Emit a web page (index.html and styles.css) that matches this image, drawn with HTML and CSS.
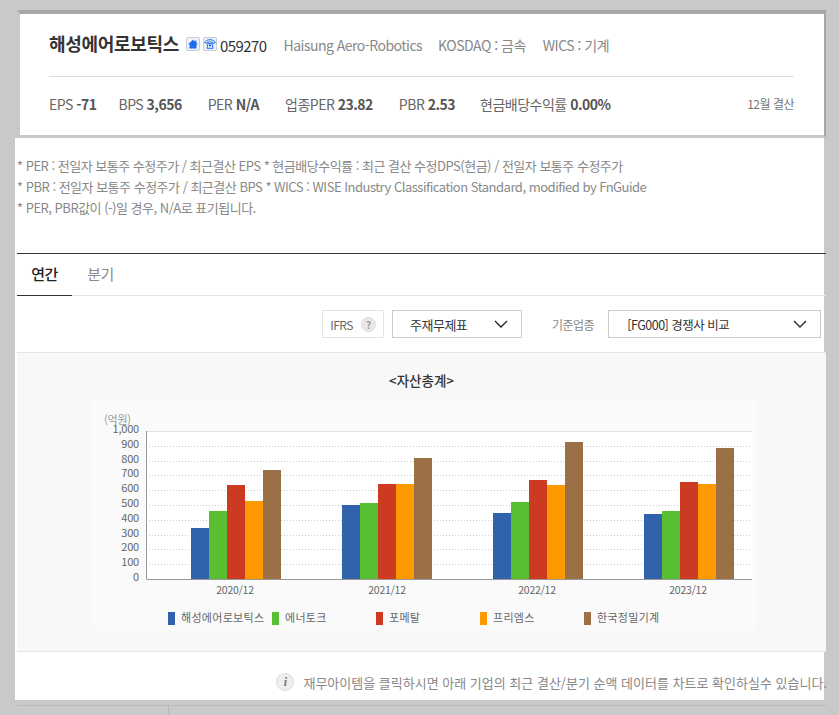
FILE: index.html
```html
<!DOCTYPE html>
<html lang="ko">
<head>
    <meta charset="UTF-8">
    <title>해성에어로보틱스</title>
    <link rel="stylesheet" href="styles.css">
</head>
<body>
    <div class="page">
        <div class="corp">
            <div class="corp-top">
                <h1>해성에어로보틱스</h1>
                <span class="ico-box">
                    <svg width="10" height="10" viewBox="0 0 10 10"><path d="M5 .8 0 5.2h1.5V9.4h7V5.2H10L8.4 3.8V1.4H7.2v1.3z" fill="#1a6ff0"/></svg>
                </span>
                <span class="ico-box">
                    <svg width="12" height="10" viewBox="0 0 12 10"><path d="M.7 3.6C1.4 1.6 3.6.7 6 .7s4.6.9 5.3 2.9L8.9 4.4 8.4 3H3.6l-.5 1.4zM3 9.3l.9-4.6h4.2L9 9.3z" fill="none" stroke="#1a6ff0" stroke-width="1"/><circle cx="6" cy="6.6" r="1.1" fill="#1a6ff0"/></svg>
                </span>
                <span class="code">059270</span>
                <span class="eng">Haisung Aero-Robotics</span>
                <span class="market">KOSDAQ : 금속</span>
                <span class="wics">WICS : 기계</span>
            </div>
            <div class="corp-stats">
                <span class="stat stat-eps">EPS <b>-71</b></span>
                <span class="stat stat-bps">BPS <b>3,656</b></span>
                <span class="stat stat-per">PER <b>N/A</b></span>
                <span class="stat stat-iper">업종PER <b>23.82</b></span>
                <span class="stat stat-pbr">PBR <b>2.53</b></span>
                <span class="stat">현금배당수익률 <b>0.00%</b></span>
                <span class="settle">12월 결산</span>
            </div>
        </div>

        <div class="sheet">
            <div class="notes">
                <p>* PER : 전일자 보통주 수정주가 / 최근결산 EPS * 현금배당수익률 : 최근 결산 수정DPS(현금) / 전일자 보통주 수정주가</p>
                <p>* PBR : 전일자 보통주 수정주가 / 최근결산 BPS * WICS : WISE Industry Classification Standard, modified by FnGuide</p>
                <p>* PER, PBR값이 (-)일 경우, N/A로 표기됩니다.</p>
            </div>

            <div class="tabs">
                <span class="tab active">연간</span>
                <span class="tab">분기</span>
            </div>

            <div class="controls">
                <div class="ifrs">IFRS <span class="help">?</span></div>
                <div class="select select-fin">주재무제표
                    <svg class="arrow" width="14" height="8" viewBox="0 0 14 8"><path d="M1 1l6 6 6-6" fill="none" stroke="#222" stroke-width="1.3"/></svg>
                </div>
                <span class="ctl-label">기준업종</span>
                <div class="select select-peer">[FG000] 경쟁사 비교
                    <svg class="arrow" width="14" height="8" viewBox="0 0 14 8"><path d="M1 1l6 6 6-6" fill="none" stroke="#222" stroke-width="1.3"/></svg>
                </div>
            </div>

            <div class="chart-panel">
                <div class="chart-title">&lt;자산총계&gt;</div>
                <svg class="chart" width="664" height="230" viewBox="92 400 664 230">
                    <rect class="plot" x="146" y="431" width="606" height="148"/>
                    <g class="grid">
                        <path d="M146 446.5H752M146 461.5H752M146 475.5H752M146 490.5H752M146 505.5H752M146 520.5H752M146 535.5H752M146 549.5H752M146 564.5H752"/>
                    </g>
                    <path class="top-line" d="M146 431.5H752"/>

                    <g class="c1">
                        <rect x="191" y="528" width="18" height="51"/>
                        <rect x="342" y="505" width="18" height="74"/>
                        <rect x="493" y="513" width="18" height="66"/>
                        <rect x="644" y="514" width="18" height="65"/>
                    </g>
                    <g class="c2">
                        <rect x="209" y="511" width="18" height="68"/>
                        <rect x="360" y="503" width="18" height="76"/>
                        <rect x="511" y="502" width="18" height="77"/>
                        <rect x="662" y="511" width="18" height="68"/>
                    </g>
                    <g class="c3">
                        <rect x="227" y="485" width="18" height="94"/>
                        <rect x="378" y="484" width="18" height="95"/>
                        <rect x="529" y="480" width="18" height="99"/>
                        <rect x="680" y="482" width="18" height="97"/>
                    </g>
                    <g class="c4">
                        <rect x="245" y="501" width="18" height="78"/>
                        <rect x="396" y="484" width="18" height="95"/>
                        <rect x="547" y="485" width="18" height="94"/>
                        <rect x="698" y="484" width="18" height="95"/>
                    </g>
                    <g class="c5">
                        <rect x="263" y="470" width="18" height="109"/>
                        <rect x="414" y="458" width="18" height="121"/>
                        <rect x="565" y="442" width="18" height="137"/>
                        <rect x="716" y="448" width="18" height="131"/>
                    </g>
                    <path class="axis" d="M146.5 431V579.5H752"/>

                    <text class="unit" x="104" y="424">(억원)</text>
                    <g class="y-labels">
                        <text x="139" y="433">1,000</text>
                        <text x="139" y="448">900</text>
                        <text x="139" y="463">800</text>
                        <text x="139" y="477">700</text>
                        <text x="139" y="492">600</text>
                        <text x="139" y="507">500</text>
                        <text x="139" y="522">400</text>
                        <text x="139" y="537">300</text>
                        <text x="139" y="551">200</text>
                        <text x="139" y="566">100</text>
                        <text x="139" y="581">0</text>
                    </g>
                    <g class="x-labels">
                        <text x="235" y="594">2020/12</text>
                        <text x="387" y="594">2021/12</text>
                        <text x="537" y="594">2022/12</text>
                        <text x="688" y="594">2023/12</text>
                    </g>

                    <g class="legend">
                        <rect class="c1" x="168" y="612" width="7" height="13"/>
                        <text x="181" y="622">해성에어로보틱스</text>
                        <rect class="c2" x="272" y="612" width="7" height="13"/>
                        <text x="285" y="622">에너토크</text>
                        <rect class="c3" x="376" y="612" width="7" height="13"/>
                        <text x="389" y="622">포메탈</text>
                        <rect class="c4" x="480" y="612" width="7" height="13"/>
                        <text x="493" y="622">프리엠스</text>
                        <rect class="c5" x="584" y="612" width="7" height="13"/>
                        <text x="597" y="622">한국정밀기계</text>
                    </g>
                </svg>
            </div>

            <div class="info">
                <span class="info-ico">i</span>
                <span>재무아이템을 클릭하시면 아래 기업의 최근 결산/분기 순액 데이터를 차트로 확인하실수 있습니다.</span>
            </div>
        </div>

        <div class="next-row"><span class="next-cell"></span></div>
    </div>
</body>
</html>
```

FILE: styles.css
```css
html, body {
    height: 715px;
    overflow: hidden;
}
body {
    margin: 0;
    background-color: #c9c9c9;
    font-family: "Noto Sans CJK KR", "Noto Sans", sans-serif;
    color: #888;
    letter-spacing: -0.5px;
}
.page {
    padding: 10px 0 0 15px;
}
/* header box */
.corp {
    box-sizing: border-box;
    width: 809px;
    height: 128px;
    margin-left: 2px;
    padding: 0 30px 0 29px;
    background: white;
    border: 3px solid #c9c9c9;
    border-top: 4px solid #a6a6a6;
    border-right: 2px solid #a6a6a6;
}
.corp-top {
    display: flex;
    align-items: center;
    height: 62px;
    border-bottom: 1px solid #ddd;
}
.corp-top h1 {
    margin: 0 7px 4px 0;
    font-size: 18px;
    font-weight: 700;
    color: #333;
    letter-spacing: -0.3px;
}
.ico-box {
    display: flex;
    align-items: center;
    justify-content: center;
    box-sizing: border-box;
    width: 14px;
    height: 14px;
    margin: 0 3px 3px 0;
    background: #eef1f6;
    border: 1px solid #c3ccd9;
    border-radius: 2px;
}
.code {
    margin-right: 17px;
    font-size: 15px;
    color: #333;
    letter-spacing: -0.6px;
}
.eng, .market, .wics {
    font-size: 14px;
}
.eng { margin-right: 16px; }
.market { margin-right: 17px; }
.corp-stats {
    display: flex;
    align-items: center;
    height: 53px;
    font-size: 14px;
    color: #666;
}
.stat b {
    font-weight: 700;
    color: #555;
}
.stat-eps { margin-right: 22px; }
.stat-bps { margin-right: 26px; }
.stat-per { margin-right: 26px; }
.stat-iper { margin-right: 26px; }
.stat-pbr { margin-right: 25px; }
.settle {
    margin-left: auto;
    font-size: 12px;
    color: #777;
}
/* white sheet */
.sheet {
    width: 809px;
    height: 562px;
    background: white;
}
.notes {
    height: 115px;
    padding: 17px 0 0 2px;
    box-sizing: border-box;
    font-size: 13px;
}
.notes p {
    margin: 0;
    line-height: 21px;
}
.tabs {
    display: flex;
    box-sizing: border-box;
    width: 809px;
    height: 43px;
    margin-left: 2px;
    border-top: 1px solid #333;
    border-bottom: 1px solid #e4e4e4;
}
.tab {
    width: 55px;
    height: 42px;
    box-sizing: border-box;
    line-height: 40px;
    text-align: center;
    font-size: 15px;
    color: #888;
}
.tab.active {
    color: #222;
    font-weight: 500;
    border-bottom: 1px solid #333;
}
.tab + .tab {
    margin-left: 1px;
}
.controls {
    display: flex;
    align-items: center;
    width: 809px;
    height: 56px;
    box-sizing: border-box;
    padding-left: 307px;
    font-size: 12px;
}
.ifrs {
    display: flex;
    align-items: center;
    justify-content: center;
    gap: 8px;
    box-sizing: border-box;
    width: 62px;
    height: 28px;
    border: 1px solid #e4e4e4;
    color: #666;
}
.help {
    width: 13px;
    height: 13px;
    border-radius: 50%;
    background: #e8e8e8;
    border: 1px solid #ddd;
    line-height: 13px;
    text-align: center;
    font-size: 10px;
    font-weight: 700;
    color: #999;
}
.select {
    display: flex;
    align-items: center;
    justify-content: space-between;
    box-sizing: border-box;
    height: 28px;
    border: 1px solid #ccc;
    font-size: 13px;
    color: #333;
}
.select-fin {
    width: 130px;
    margin-left: 8px;
    padding: 0 13px 0 17px;
}
.select-peer {
    width: 213px;
    padding: 0 13px 0 18px;
    font-size: 12.5px;
}
.ctl-label {
    margin: 0 14px 0 30px;
    color: #888;
}
.chart-panel {
    box-sizing: border-box;
    width: 809px;
    height: 300px;
    margin-left: 2px;
    background: #f8f8f9;
    border-top: 1px solid #e4e4e8;
    border-bottom: 1px solid #e4e4e4;
}
.chart-title {
    height: 47px;
    line-height: 54px;
    text-align: center;
    font-size: 13.5px;
    font-weight: 500;
    color: #333;
    letter-spacing: 0;
    padding-left: -1px;
}
.chart {
    display: block;
    margin-left: 75px;
    background: #fafafa;
}
.chart text {
    font-size: 11px;
    fill: #666;
    letter-spacing: -0.2px;
}
.plot { fill: white; }
.grid path {
    fill: none;
    stroke: #ccc;
    stroke-dasharray: 1 2;
}
.top-line {
    fill: none;
    stroke: #e2e2e2;
    stroke-width: 1;
}
.axis {
    fill: none;
    stroke: #999;
}
.c1 { fill: #3162ac; }
.c2 { fill: #58bf31; }
.c3 { fill: #cc3a21; }
.c4 { fill: #ff9900; }
.c5 { fill: #9c7047; }
.y-labels text { text-anchor: end; }
.x-labels text { text-anchor: middle; font-size: 10.5px; }
.chart .unit { fill: #999; }
.legend text { letter-spacing: 0.3px; }
.info {
    display: flex;
    align-items: center;
    justify-content: flex-end;
    gap: 9px;
    box-sizing: border-box;
    width: 812px;
    height: 48px;
    padding-top: 12px;
    font-size: 13px;
    color: #888;
    letter-spacing: 0;
    white-space: nowrap;
}
.info-ico {
    width: 16px;
    height: 16px;
    border-radius: 50%;
    background: #eee;
    border: 1px solid #ddd;
    line-height: 16px;
    text-align: center;
    font-family: "Liberation Serif", serif;
    font-style: italic;
    font-weight: 700;
    font-size: 12px;
    color: #777;
}
.next-row {
    box-sizing: border-box;
    width: 809px;
    height: 10px;
    margin: 5px 0 0 2px;
    border-top: 1px solid #b9b9bd;
}
.next-cell {
    display: block;
    width: 151px;
    height: 10px;
    border-right: 1px solid #b9b9bd;
}
```
